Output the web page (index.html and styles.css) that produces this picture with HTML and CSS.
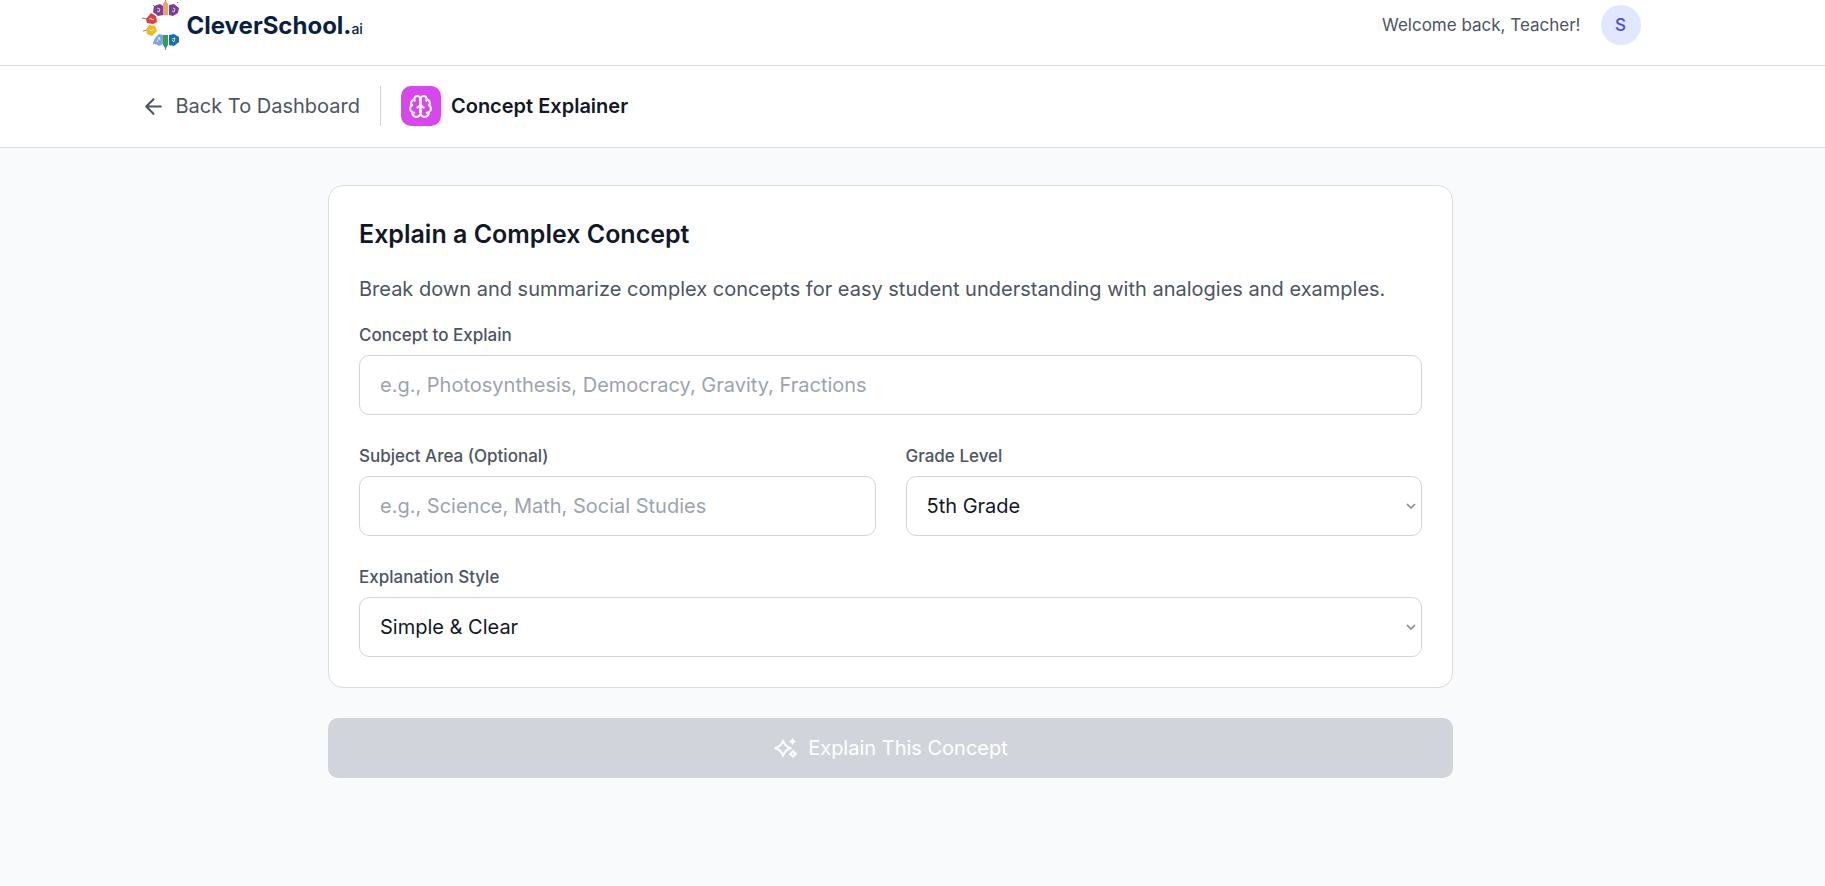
FILE: index.html
```html
<!DOCTYPE html>
<html lang="en">
<head>
    <meta charset="UTF-8">
    <meta name="viewport" content="width=device-width, initial-scale=1.0">
    <title>Concept Explainer</title>
    <link rel="stylesheet" href="styles.css">
</head>
<body>
    <header class="topbar">
        <div class="container topbar-inner">
            <a href="#" class="logo">
                <svg class="logo-mark" viewBox="6 0 40 50" aria-hidden="true">
                    <path d="M18 5l3 3M7 18l5 1M8 31l5-1M18 44l4-4M42 3l1-1M30.500 0v3M30.500 46v4" stroke="#9a7a6a" stroke-width="1"/>
                    <path d="M19 6l6-2 3 2v9l-5 1-5-4z" fill="#7b3f98"/>
                    <path d="M34 5l5-1 5 4-1 5-5 3-4-1z" fill="#7b3f98"/>
                    <path d="M28 15V4l2-3h1l2 3v11z" fill="#f3a25c"/>
                    <path d="M11 19l5-6 5 3 1 6-4 2-6-1z" fill="#e43d3c"/>
                    <path d="M11 30l3-5 6 1 2 5-5 5-5-2z" fill="#f1b91f"/>
                    <path d="M20 38l4-4 4 1v9l-4 2-6-3z" fill="#7da7e0"/>
                    <path d="M34 35l5-1 5 3v5l-5 4-5-1z" fill="#1d6fa8"/>
                    <path d="M28 35h5v10l-2 3h-1l-2-3z" fill="#35a04a"/>
                    <path d="M22 8l3 1-1 3-2-1M38 8l2 1-1 3-2-1M14 19l2-1 1 2 2-1M14 29l2 2 3-2M22 42l2-5 1 3M37 39l3-1-1 4-2-2" fill="none" stroke="#fff" stroke-width="1" opacity=".7"/>
                </svg>
                <span class="logo-text">CleverSchool.<small>ai</small></span>
            </a>
            <div class="user">
                <span>Welcome back, Teacher!</span>
                <span class="avatar">S</span>
            </div>
        </div>
    </header>

    <nav class="toolbar">
        <div class="container toolbar-inner">
            <a href="#" class="back">
                <svg class="icon" viewBox="0 0 24 24"><path d="m12 19-7-7 7-7M19 12H5"/></svg>
                Back To Dashboard
            </a>
            <span class="divider"></span>
            <div class="tool">
                <span class="tool-icon">
                    <svg class="icon" viewBox="0 0 24 24">
                        <path d="M12 5a3 3 0 1 0-5.997.125 4 4 0 0 0-2.526 5.770 4 4 0 0 0 .556 6.588A4 4 0 1 0 12 18Z"/>
                        <path d="M12 5a3 3 0 1 1 5.997.125 4 4 0 0 1 2.526 5.770 4 4 0 0 1-.556 6.588A4 4 0 1 1 12 18Z"/>
                        <path d="M15 13a4.500 4.500 0 0 1-3-4 4.500 4.500 0 0 1-3 4"/>
                        <path d="M17.599 6.500a3 3 0 0 0 .399-1.375M6.003 5.125A3 3 0 0 0 6.401 6.500M3.477 10.896a4 4 0 0 1 .585-.396M19.938 10.500a4 4 0 0 1 .585.396M6 18a4 4 0 0 1-1.967-.516M19.967 17.484A4 4 0 0 1 18 18"/>
                    </svg>
                </span>
                <h1>Concept Explainer</h1>
            </div>
        </div>
    </nav>

    <main class="container">
        <form class="explainer">
            <section class="card">
                <h2>Explain a Complex Concept</h2>
                <p>Break down and summarize complex concepts for easy student understanding with analogies and examples.</p>

                <div class="fields">
                    <div class="field wide">
                        <label for="concept">Concept to Explain</label>
                        <input type="text" id="concept" placeholder="e.g., Photosynthesis, Democracy, Gravity, Fractions">
                    </div>
                    <div class="field">
                        <label for="subject">Subject Area (Optional)</label>
                        <input type="text" id="subject" placeholder="e.g., Science, Math, Social Studies">
                    </div>
                    <div class="field">
                        <label for="grade">Grade Level</label>
                        <select id="grade">
                            <option>5th Grade</option>
                        </select>
                    </div>
                    <div class="field wide">
                        <label for="style">Explanation Style</label>
                        <select id="style">
                            <option>Simple &amp; Clear</option>
                        </select>
                    </div>
                </div>
            </section>

            <button type="submit" class="submit" disabled>
                <svg class="icon" viewBox="0 0 25 25">
                    <path d="M10 4.500Q11.800 10.400 17.700 12.200Q11.800 14 10 19.900Q8.200 14 2.300 12.200Q8.200 10.400 10 4.500Z"/>
                    <path class="solid" d="M19.500 2Q20.300 4.700 23 5.500Q20.300 6.300 19.500 9Q18.700 6.300 16 5.500Q18.700 4.700 19.500 2Z"/>
                    <path d="M20 15Q20.800 17.200 23 18Q20.800 18.800 20 21Q19.200 18.800 17 18Q19.200 17.200 20 15Z"/>
                </svg>
                Explain This Concept
            </button>
        </form>
    </main>
</body>
</html>
```

FILE: styles.css
```css
* {
    box-sizing: border-box;
    margin: 0;
    padding: 0;
}

body {
    font-family: Inter, 'Liberation Sans', sans-serif;
    font-size: 20px;
    line-height: 30px;
    color: #111827;
    background-color: #f9fafb;
    min-height: 100vh;
}

a {
    color: inherit;
    text-decoration: none;
}

.topbar,
.toolbar {
    background-color: #fff;
    border-bottom: 1px solid #d9dbde;
}

.topbar,
.toolbar,
main {
    padding-right: 44px;
}

.container {
    max-width: 1500px;
    margin: 0 auto;
}

.topbar-inner {
    display: flex;
    align-items: center;
    justify-content: space-between;
    padding-bottom: 15px;
}

.logo {
    display: flex;
    align-items: center;
    gap: 6px;
}

.logo-mark {
    width: 40px;
    height: 50px;
}

.logo-text {
    padding-top: 4px;
    font-size: 24px;
    font-weight: 700;
    color: #0a1f44;
}

.logo-text small {
    font-size: 14px;
    font-weight: 500;
}

.user {
    display: flex;
    align-items: center;
    gap: 20px;
    font-size: 17px;
    color: #4b5563;
}

.avatar {
    display: flex;
    align-items: center;
    justify-content: center;
    width: 40px;
    height: 40px;
    border-radius: 50%;
    font-weight: 500;
    color: #4f46e5;
    background-color: #e0e7ff;
}

.toolbar-inner {
    display: flex;
    align-items: center;
    gap: 20px;
    padding: 20px 0 21px;
}

.back,
.tool {
    display: flex;
    align-items: center;
    gap: 10px;
}

.back {
    color: #4b5563;
}

.icon {
    width: 25px;
    height: 25px;
    fill: none;
    stroke: currentColor;
    stroke-width: 2;
    stroke-linecap: round;
    stroke-linejoin: round;
}

.divider {
    width: 1px;
    height: 40px;
    background-color: #d1d5db;
}

.tool-icon {
    display: flex;
    align-items: center;
    justify-content: center;
    width: 40px;
    height: 40px;
    border-radius: 10px;
    color: #fff;
    background-color: #d946ef;
}

.tool h1 {
    font-size: 20px;
    font-weight: 600;
}

.explainer {
    max-width: 1125px;
    margin: 0 auto;
    padding: 37px 0;
}

.card {
    padding: 30px;
    border: 1px solid #d9dbde;
    border-radius: 15px;
    background-color: #fff;
}

.card h2 {
    font-size: 25px;
    font-weight: 600;
    line-height: 37px;
    margin-bottom: 21px;
}

.card p {
    color: #4b5563;
    margin-bottom: 19px;
}

.fields {
    display: grid;
    grid-template-columns: 1fr 1fr;
    gap: 29px 30px;
}

.wide {
    grid-column: 1 / -1;
}

.field label {
    display: block;
    font-size: 17px;
    font-weight: 500;
    line-height: 25px;
    color: #4b5563;
    margin-bottom: 7px;
}

.field input,
.field select {
    display: block;
    width: 100%;
    height: 60px;
    padding: 0 20px;
    border: 1px solid #d1d5db;
    border-radius: 10px;
    font: inherit;
    color: #111827;
    background-color: #fff;
}

.field input::placeholder {
    color: #9ca3af;
}

.field select {
    appearance: none;
    background-image: url("data:image/svg+xml,%3Csvg xmlns='http://www.w3.org/2000/svg' viewBox='0 0 10 6' fill='none' stroke='%23858585' stroke-width='1.500'%3E%3Cpath d='M1 1l4 4 4-4'/%3E%3C/svg%3E");
    background-repeat: no-repeat;
    background-position: right 5px center;
    background-size: 10px 6px;
}

.submit {
    display: flex;
    align-items: center;
    justify-content: center;
    gap: 10px;
    width: 100%;
    height: 60px;
    margin-top: 30px;
    border: none;
    border-radius: 10px;
    font: inherit;
    color: #fff;
    background-color: #d1d5db;
}

.submit .solid {
    fill: currentColor;
    stroke: none;
}
```
